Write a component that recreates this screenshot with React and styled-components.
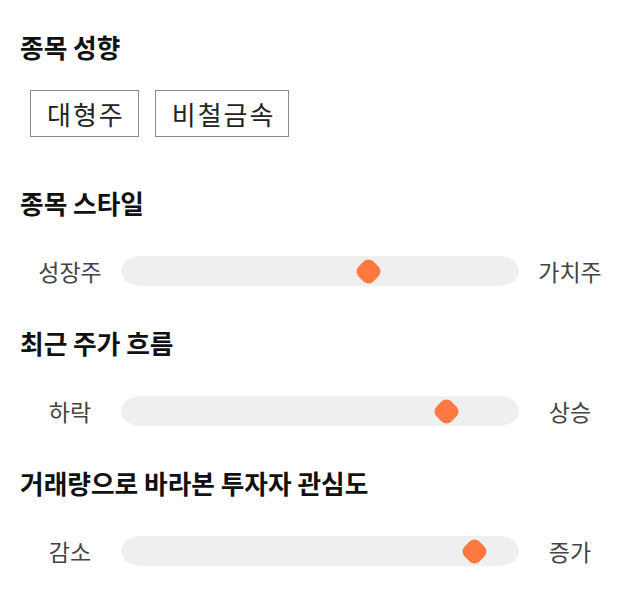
import React from "react";
import styled, { createGlobalStyle } from "styled-components";

const Global = createGlobalStyle`
  html, body { margin: 0; padding: 0; background: #fff; }
  body { font-family: "Noto Sans CJK KR", "Noto Sans", sans-serif; color: #111; }
`;

const Page = styled.div`
  padding: 32px 20px 0 20px;
  display: flex;
  flex-direction: column;
`;

const Section = styled.section`
  display: flex;
  flex-direction: column;
  margin-bottom: ${(p) => p.$after}px;
`;

const Heading = styled.h2`
  margin: 0;
  font-size: 25.7px;
  line-height: 30px;
  font-weight: 700;
  color: #111;
`;

const Chips = styled.div`
  display: flex;
  gap: 16px;
  margin-top: 28px;
  padding-left: 10px;
`;

const Chip = styled.div`
  height: 47px;
  box-sizing: border-box;
  border: 1px solid #8a8a8a;
  padding: 0 13px 0 16px;
  display: flex;
  align-items: center;
  font-size: 26px;
  letter-spacing: 2px;
  color: #222;
`;

const SliderRow = styled.div`
  display: grid;
  grid-template-columns: 80px 398px 80px;
  column-gap: 11px;
  align-items: center;
  margin-top: 38px;
  padding-left: 10px;
`;

const Label = styled.span`
  text-align: center;
  font-size: 23px;
  line-height: 30px;
  color: #444;
`;

const Track = styled.div`
  position: relative;
  height: 30px;
  background: #efefef;
  border-radius: 5% / 50%;
`;

const Thumb = styled.div`
  position: absolute;
  top: 50%;
  width: 21px;
  height: 21px;
  margin-left: -10.5px;
  margin-top: -10.5px;
  background: #ff7840;
  border-radius: 7px;
  transform: rotate(45deg);
`;

const sliders = [
  { title: "종목 스타일", left: "성장주", right: "가치주", value: 0.623 },
  { title: "최근 주가 흐름", left: "하락", right: "상승", value: 0.819 },
  { title: "거래량으로 바라본 투자자 관심도", left: "감소", right: "증가", value: 0.889 },
];

export default function App() {
  return (
    <Page>
      <Global />
      <Section $after={51}>
        <Heading>종목 성향</Heading>
        <Chips>
          <Chip>대형주</Chip>
          <Chip>비철금속</Chip>
        </Chips>
      </Section>
      {sliders.map((s) => (
        <Section key={s.title} $after={42}>
          <Heading>{s.title}</Heading>
          <SliderRow>
            <Label>{s.left}</Label>
            <Track>
              <Thumb style={{ left: `${s.value * 100}%` }} />
            </Track>
            <Label>{s.right}</Label>
          </SliderRow>
        </Section>
      ))}
    </Page>
  );
}
